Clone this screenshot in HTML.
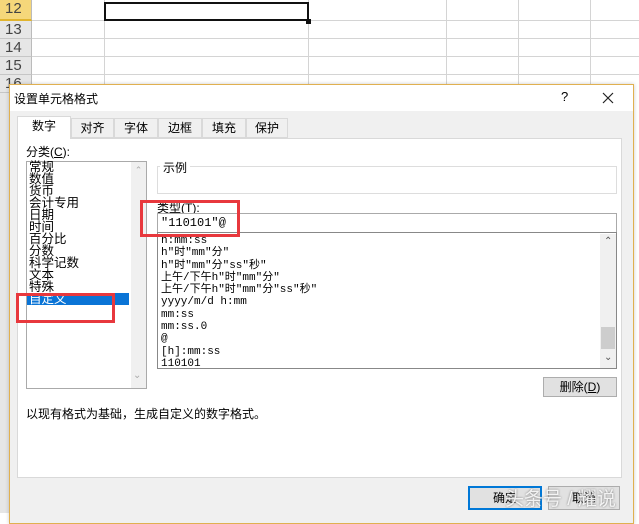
<!DOCTYPE html>
<html><head><meta charset="utf-8"><style>
*{margin:0;padding:0;box-sizing:border-box}
body{width:639px;height:513px;overflow:hidden;background:#fff;position:relative;font-family:"Liberation Sans","Noto Sans CJK SC",sans-serif;font-size:12px;color:#000}
.a{position:absolute}
.hl{position:absolute;left:0;width:639px;height:1px;background:#d4d4d4}
.vl{position:absolute;top:0;width:1px;height:90px;background:#d4d4d4}
.rh{position:absolute;left:0;width:32px;background:#e6e6e6;border-bottom:1px solid #c6c6c6;border-right:1px solid #bbb;font-size:15px;color:#444;padding-left:5px;line-height:18px;font-family:"Liberation Sans",sans-serif}
.tab{position:absolute;top:118px;height:20px;border:1px solid #d9d9d9;background:#f0f0f0;font-size:12px;text-align:center;line-height:18px}
.mono{font-family:"Liberation Mono","Noto Sans CJK SC",monospace;font-size:11px;line-height:12.3px}
</style></head><body>
<div class="vl" style="left:104px"></div><div class="vl" style="left:308px"></div><div class="vl" style="left:446px"></div><div class="vl" style="left:518px"></div><div class="vl" style="left:590px"></div>
<div class="hl" style="top:20px"></div><div class="hl" style="top:38px"></div><div class="hl" style="top:56px"></div><div class="hl" style="top:74px"></div>
<div class="rh" style="top:0;height:21px;background:#f5d77a;border-bottom:2px solid #e1b42e">12</div>
<div class="rh" style="top:21px;height:18px">13</div>
<div class="rh" style="top:39px;height:18px">14</div>
<div class="rh" style="top:57px;height:18px">15</div>
<div class="rh" style="top:75px;height:18px">16</div>
<div class="rh" style="top:93px;height:420px;border-bottom:none"></div>
<div class="a" style="left:104px;top:2px;width:205px;height:19px;border:2px solid #111"></div>
<div class="a" style="left:306px;top:19px;width:5px;height:5px;background:#111"></div>
<div class="a" style="left:9px;top:84px;width:625px;height:440px;background:#f0f0f0;border:1px solid #e0b050;box-shadow:0 0 4px rgba(0,0,0,.2)">
 <div class="a" style="left:0;top:0;width:623px;height:26px;background:#fff"></div>
 <div class="a" style="left:4px;top:5px;font-size:12px">设置单元格格式</div>
 <div class="a" style="left:551px;top:4px;font-size:13px">?</div>
 <svg class="a" style="left:592px;top:7px" width="12" height="12"><path d="M1 1L11 11M11 1L1 11" stroke="#222" stroke-width="1.2"/></svg>
 <div class="a" style="left:7px;top:53px;width:605px;height:340px;background:#fff;border:1px solid #d9d9d9"></div>
</div>
<div class="tab" style="left:17px;top:116px;width:54px;height:23px;background:#fff;border-bottom:none">数字</div>
<div class="tab" style="left:71px;width:43px">对齐</div>
<div class="tab" style="left:114px;width:44px">字体</div>
<div class="tab" style="left:158px;width:44px">边框</div>
<div class="tab" style="left:202px;width:44px">填充</div>
<div class="tab" style="left:246px;width:42px">保护</div>
<div class="a" style="left:26px;top:143px">分类(<u>C</u>):</div>
<div class="a" style="left:26px;top:161px;width:121px;height:228px;border:1px solid #aaa;background:#fff"></div>
<div class="a" style="left:131px;top:162px;width:15px;height:226px;background:#f0f0f0;color:#aaa;font-size:9px;text-align:center;line-height:16px">⌃</div>
<div class="a" style="left:133px;top:370px;color:#aaa;font-size:10px">⌄</div>
<div class="a" style="left:27px;top:293px;width:102px;height:12px;background:#0a74d6"></div>
<div class="a" style="left:29px;top:161px;line-height:12px;font-size:12.5px">常规<br>数值<br>货币<br>会计专用<br>日期<br>时间<br>百分比<br>分数<br>科学记数<br>文本<br>特殊<br><span style="color:#fff">自定义</span></div>
<div class="a" style="left:157px;top:166px;width:460px;height:28px;border:1px solid #ddd"></div>
<div class="a" style="left:160px;top:159px;background:#fff;padding:0 3px">示例</div>
<div class="a" style="left:157px;top:199px">类型(<u>T</u>):</div>
<div class="a" style="left:157px;top:213px;width:460px;height:20px;border:1px solid #aaa;background:#fff"></div>
<div class="a mono" style="left:161px;top:217px;font-size:12px">"110101"@</div>
<div class="a" style="left:157px;top:232px;width:460px;height:137px;border:1px solid #888;background:#fff"></div>
<div class="a" style="left:600px;top:234px;width:16px;height:134px;background:#f0f0f0"></div>
<div class="a" style="left:601px;top:327px;width:14px;height:22px;background:#cdcdcd"></div>
<div class="a" style="left:604px;top:236px;font-size:10px;color:#555">⌃</div>
<div class="a" style="left:604px;top:352px;font-size:10px;color:#555">⌄</div>
<div class="a mono" style="left:161px;top:235px">h:mm:ss<br>h"时"mm"分"<br>h"时"mm"分"ss"秒"<br>上午/下午h"时"mm"分"<br>上午/下午h"时"mm"分"ss"秒"<br>yyyy/m/d h:mm<br>mm:ss<br>mm:ss.0<br>@<br>[h]:mm:ss<br>110101</div>
<div class="a" style="left:543px;top:377px;width:74px;height:20px;border:1px solid #adadad;background:#e1e1e1;text-align:center;line-height:18px">删除(<u>D</u>)</div>
<div class="a" style="left:26px;top:405px">以现有格式为基础，生成自定义的数字格式。</div>
<div class="a" style="left:468px;top:486px;width:74px;height:24px;border:2px solid #0078d7;background:#e1e1e1;text-align:center;line-height:20px">确定</div>
<div class="a" style="left:548px;top:486px;width:72px;height:24px;border:1px solid #adadad;background:#e1e1e1;text-align:center;line-height:22px">取消</div>
<div class="a" style="left:505px;top:484px;font-size:19px;color:rgba(255,255,255,.85);text-shadow:0 0 2px #777">头条号 / 耀说</div>
<div class="a" style="left:140px;top:200px;width:100px;height:37px;border:3px solid #e8383d"></div>
<div class="a" style="left:16px;top:293px;width:99px;height:30px;border:3px solid #e8383d"></div>
</body></html>
